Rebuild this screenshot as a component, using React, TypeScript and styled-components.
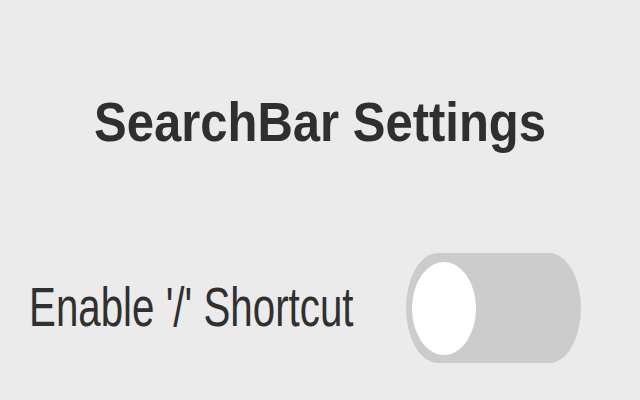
import * as React from "react";
import { useState } from "react";
import styled, { createGlobalStyle } from "styled-components";

const GlobalStyle = createGlobalStyle`
    html, body {
        margin: 0;
        padding: 0;
        background: #ebebeb;
    }
    body {
        font-family: "Liberation Sans", Arial, sans-serif;
        color: #333333;
    }
`;

const App = () => {
    const [enabled, setEnabled] = useState(false);

    return (
        <>
            <GlobalStyle />
            <S.Page>
                <S.Title>SearchBar Settings</S.Title>
                <S.Row>
                    <S.LabelCell>
                        <S.Label>Enable '/' Shortcut</S.Label>
                    </S.LabelCell>
                    <S.Switch
                        role="switch"
                        aria-checked={enabled}
                        $on={enabled}
                        onClick={() => setEnabled(!enabled)}
                    >
                        <S.Knob $on={enabled} />
                    </S.Switch>
                </S.Row>
            </S.Page>
        </>
    );
};

const S = {
    Page: styled.div`
        width: 640px;
        height: 400px;
        box-sizing: border-box;
        padding-top: 93px;
        display: flex;
        flex-direction: column;
        overflow: hidden;
    `,
    Title: styled.h1`
        margin: 0;
        height: 56px;
        font-size: 49px;
        line-height: 56px;
        font-weight: 700;
        text-align: center;
        color: #2f2f2f;
        transform: scaleY(1.15);
        transform-origin: center;
    `,
    Row: styled.div`
        margin-top: 104px;
        padding-left: 29px;
        display: flex;
        align-items: center;
    `,
    LabelCell: styled.div`
        flex: 0 0 377px;
    `,
    Label: styled.span`
        display: inline-block;
        font-size: 40.3px;
        line-height: 48px;
        color: #303030;
        transform: scaleY(1.4);
        transform-origin: center;
    `,
    Switch: styled.button<{ $on: boolean }>`
        width: 175px;
        height: 110px;
        padding: 0 0 0 6px;
        border: none;
        border-radius: 32px / 55px;
        background: ${(p) => (p.$on ? "#2196f3" : "#cccccc")};
        cursor: pointer;
        display: flex;
        align-items: center;
        box-sizing: border-box;
    `,
    Knob: styled.span<{ $on: boolean }>`
        width: 64px;
        height: 93px;
        border-radius: 50%;
        background: #ffffff;
        transform: translateX(${(p) => (p.$on ? "99px" : "0")});
        transition: transform 0.3s;
    `,
};

export default App;
